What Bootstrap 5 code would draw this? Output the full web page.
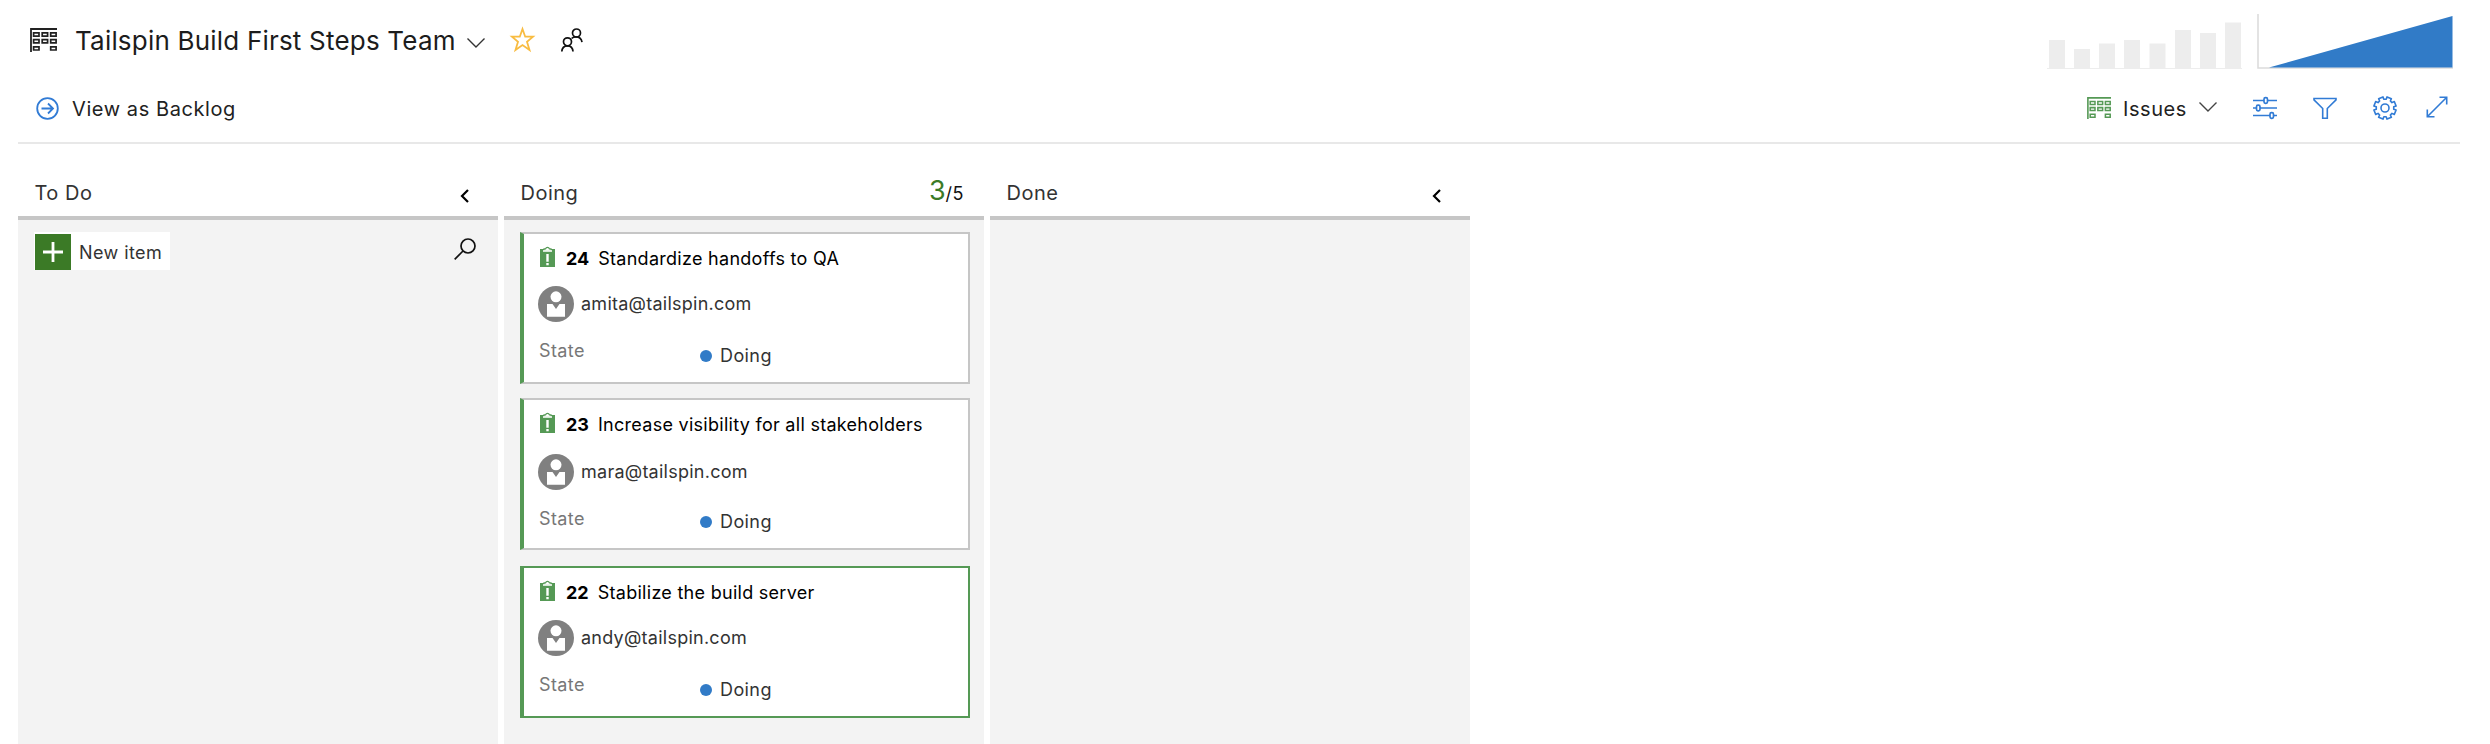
<!DOCTYPE html>
<html lang="en">
<head>
<meta charset="utf-8">
<title>Tailspin Build First Steps Team</title>
<link href="https://cdn.jsdelivr.net/npm/bootstrap@5.3.0/dist/css/bootstrap.min.css" rel="stylesheet">
<style>
body{font-family:Inter,sans-serif;color:#333;background:#fff;overflow:hidden;height:744px}
svg{display:block;flex:none;overflow:visible}
.page{padding:0 30px 0 18px;height:744px}
.title-row{height:78px;padding:11px 7px 0 12px}
.team{font-size:26px;line-height:34px;font-weight:400;color:#1c1c1c;letter-spacing:.2px;width:379px;margin:13px 0 0 18px;white-space:nowrap}
.tool-row{height:66px;border-bottom:2px solid #e8e8e8;padding:0 12px 4px 18px;color:#222;font-size:20px}
.tool-row span{line-height:28px;letter-spacing:.58px;white-space:nowrap;padding-top:2px}
.board{gap:6px;height:600px;padding-top:32px}
.lane{width:480px}
.lane-head{height:44px;border-bottom:4px solid #c6c6c6;padding:3px 0 0 16.5px;font-size:20px;line-height:28px;letter-spacing:.5px}
.lane-body{background:#f3f3f3;padding:12px 14px 0 16px}
.new-item{width:136px;height:38px;background:#fff;padding:2px 0 0 .5px;font-size:18px;letter-spacing:.42px}
.plus{width:36.5px;height:36px;background:#3b7a26}
.work{width:450px;height:152px;background:#fff;border:2px solid #c6c6c6;border-left:4px solid #559955;margin-bottom:14px;font-size:18px;letter-spacing:.4px;padding:12px 0 0 14px;line-height:26px}
.work.second{margin-bottom:16px}
.work.active-item{border-color:#559955}
.work-title{height:40px;color:#000;padding-left:2px;white-space:nowrap}
.work-title b{margin-left:11px;letter-spacing:0}
.work-title span{margin-left:9px;letter-spacing:.28px}
.person{height:36px;white-space:nowrap}
.person span{margin:5px 0 0 7px;letter-spacing:.25px}
.second .person{margin-top:2px}
.second .state-row{margin-top:-2px}
.state-row{height:50px;padding-left:1px}
.state-label{width:161px;color:#777;padding-top:16px}
.second .state-label{padding-top:18px}
.dot{width:12px;height:12px;background:#317bc7;margin-top:28px}
.value{padding:21px 0 0 8px}
.limit{font-size:18px;color:#111;padding:1px 20px 0 0}
.limit b{font-size:27px;line-height:20px;color:#3b7a26;font-weight:400;letter-spacing:0}
</style>
</head>
<body>
<svg width="0" height="0" class="position-absolute"><defs>
<g id="grid" fill="none" stroke="currentColor"><path d="M1 24V1H27" stroke-width="1.8"/><path stroke-width="1.7" d="M3.600 4.900H9v3.200H3.600zM12.200 4.900h5.400v3.200h-5.400zM20.700 4.900h5.400v3.200h-5.400zM3.600 11.600H9v3.200H3.600zM12.200 11.600h5.400v3.200h-5.400zM20.700 11.600h5.400v3.200h-5.400zM3.600 18.800H9V22H3.600zM20.700 18.800h5.400V22h-5.400z"/></g>
<g id="clip"><path fill="#559955" d="M0 3h15v18H0z"/><path fill="#fff" stroke="#559955" stroke-width="1.200" d="M4 4.600V2.800h1.600a2 2 0 0 1 3.800 0H11v1.800"/><path fill="#fff" d="M3 4.200h9v1.500H3zM6.300 8h2.400v7.800H6.300zM6.300 17h2.400v2.300H6.300z"/></g>
<g id="avatar"><circle cx="18" cy="18" r="18" fill="#808080"/><circle cx="18" cy="10.800" r="5.500" fill="#fff"/><path fill="#fff" d="M9 18h5.500l3.500 5 3.500-5H27v12.700H9z"/></g>
</defs></svg>
<main class="page">
<header class="title-row d-flex align-items-start">
<svg width="27" height="24" style="margin-top:17px;color:#222"><use href="#grid"/></svg>
<h1 class="team">Tailspin Build First Steps Team</h1>
<svg width="18" height="10" style="margin:27px 0 0 13px"><path d="M.5.5 9 9 17.500.5" fill="none" stroke="#333" stroke-width="1.400"/></svg>
<svg width="25" height="25" style="margin:16px 0 0 25px"><path d="M12.500 2l2.700 7.700H23L17 14.700l2.500 8.300-7-5-7 5L8 14.700 2 9.700h7.800z" fill="none" stroke="#f8bc42" stroke-width="1.800"/></svg>
<svg width="22" height="24" style="margin:17px 0 0 26px"><g fill="none" stroke="#111" stroke-width="1.700"><circle cx="15.500" cy="5" r="4"/><circle cx="6.500" cy="13.800" r="4"/><path d="M.8 23.500c.3-3.500 2.500-5.700 5.700-5.700s5.200 2.200 5.500 5.700M10.600 10.500c1-1 2.700-1.600 4.400-1.600 3.500 0 5.500 1.900 6 5.300"/></g></svg>
<svg class="ms-auto" width="195" height="60"><path fill="#ededed" d="M2 29h16v28H2zM27 38h16v19H27zM52 32.500h16V57H52zM77 29h16v28H77zM102.500 32.500h16V57h-16zM128 19h16v38h-16zM153 22h16v35h-16zM178 11.500h16V57h-16z"/><path stroke="#ededed" d="M0 57.500h195"/></svg>
<svg width="196" height="60" style="margin-left:15px"><path d="M1 3v54h195" fill="none" stroke="#dcdcdc" stroke-width="1.600"/><path d="M12 56.500 195.500 5v51.500z" fill="#317bc7"/></svg>
</header>
<div class="tool-row d-flex align-items-center">
<svg width="23" height="23"><g fill="none" stroke="#317bd5" stroke-width="1.800"><circle cx="11.500" cy="11.500" r="10.300"/><path d="M5.500 11.500h11M12 6.500l5 5-5 5"/></g></svg>
<span style="margin-left:13px">View as Backlog</span>
<svg class="ms-auto" width="24" height="22" viewBox="0 0 27 24" preserveAspectRatio="none" style="color:#559955"><use href="#grid"/></svg>
<span style="margin-left:12px">Issues</span>
<svg width="18" height="10" style="margin:-2px 0 0 12px"><path d="M.5.5 9 9 17.500.5" fill="none" stroke="#444" stroke-width="1.400"/></svg>
<svg width="24" height="24" style="margin-left:36px"><g fill="#fff" stroke="#317bd5" stroke-width="1.700"><path d="M0 4.500h24M0 12h24M0 19.500h24"/><rect x="11" y="1.700" width="3.500" height="5.600" rx="1.500"/><rect x="3.500" y="9.200" width="3.500" height="5.600" rx="1.500"/><rect x="17" y="16.700" width="3.500" height="5.600" rx="1.500"/></g></svg>
<svg width="24" height="24" style="margin-left:36px"><path d="M1 2.500h22v1.300l-8.700 8.700v9.800H9.700v-9.800L1 3.800z" fill="none" stroke="#317bd5" stroke-width="1.600"/></svg>
<svg width="24" height="24" style="margin-left:36px"><g fill="none" stroke="#317bd5" stroke-width="1.600" stroke-linejoin="round"><circle cx="12" cy="12" r="4"/><path id="gear" d="M12 1"/></g></svg>
<svg width="22" height="22" style="margin:-2px 0 0 29px"><path d="M1.500 20.500l19-19M13.500 1.300H20.700V8.500M1.300 13.500V20.700H8.500" fill="none" stroke="#317bd5" stroke-width="1.600"/></svg>
</div>
<section class="board d-flex">
<div class="lane d-flex flex-column"><div class="lane-head d-flex justify-content-between"><span>To Do</span><svg width="9" height="14" style="margin:10px 29px 0 0"><path d="M8 1 2 7l6 6" fill="none" stroke="#000" stroke-width="2.200"/></svg></div>
<div class="lane-body flex-fill d-flex justify-content-between align-items-start"><div class="new-item d-flex align-items-center"><div class="plus d-flex align-items-center justify-content-center"><svg width="20" height="20"><path d="M10 0v20M0 10h20" stroke="#fff" stroke-width="2.800"/></svg></div><span style="margin-left:8px;white-space:nowrap">New item</span></div>
<svg width="22" height="22" style="margin:6px 8px 0 0"><g fill="none" stroke="#111" stroke-width="1.700"><circle cx="14" cy="8" r="7"/><path d="M9 13 .7 21.300"/></g></svg></div></div>
<div class="lane d-flex flex-column"><div class="lane-head d-flex justify-content-between"><span>Doing</span><span class="limit"><b>3</b>/5</span></div>
<div class="lane-body flex-fill">
<article class="work"><div class="work-title d-flex"><svg width="15" height="21"><use href="#clip"/></svg><b>24</b><span>Standardize handoffs to QA</span></div><div class="person d-flex"><svg width="36" height="36"><use href="#avatar"/></svg><span>amita@tailspin.com</span></div><div class="state-row d-flex"><div class="state-label">State</div><div class="dot rounded-circle"></div><div class="value">Doing</div></div></article>
<article class="work second"><div class="work-title d-flex"><svg width="15" height="21"><use href="#clip"/></svg><b>23</b><span>Increase visibility for all stakeholders</span></div><div class="person d-flex"><svg width="36" height="36"><use href="#avatar"/></svg><span>mara@tailspin.com</span></div><div class="state-row d-flex"><div class="state-label">State</div><div class="dot rounded-circle"></div><div class="value">Doing</div></div></article>
<article class="work active-item"><div class="work-title d-flex"><svg width="15" height="21"><use href="#clip"/></svg><b>22</b><span>Stabilize the build server</span></div><div class="person d-flex"><svg width="36" height="36"><use href="#avatar"/></svg><span>andy@tailspin.com</span></div><div class="state-row d-flex"><div class="state-label">State</div><div class="dot rounded-circle"></div><div class="value">Doing</div></div></article>
</div></div>
<div class="lane d-flex flex-column"><div class="lane-head d-flex justify-content-between"><span>Done</span><svg width="9" height="14" style="margin:10px 29px 0 0"><path d="M8 1 2 7l6 6" fill="none" stroke="#000" stroke-width="2.200"/></svg></div><div class="lane-body flex-fill"></div></div>
</section>
</main>
<script src="https://cdn.jsdelivr.net/npm/bootstrap@5.3.0/dist/js/bootstrap.bundle.min.js"></script>
<script>
// Eight-tooth outline of the settings gear
const pts=[];
for(let i=0;i<8;i++){for(const [a,r] of [[-15,8.800],[-12,11.300],[12,11.300],[15,8.800]]){const t=(i*45+22.500+a)*Math.PI/180;pts.push((12+r*Math.cos(t)).toFixed(2)+' '+(12+r*Math.sin(t)).toFixed(2));}}
document.getElementById('gear').setAttribute('d','M'+pts.join('L')+'Z');
</script>
</body>
</html>
